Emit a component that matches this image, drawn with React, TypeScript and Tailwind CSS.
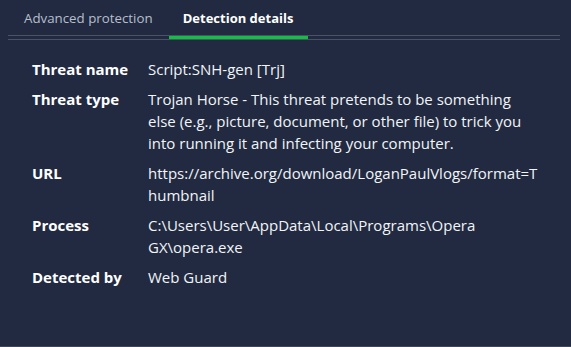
const rows: { label: string; lines: string[] }[] = [
  { label: "Threat name", lines: ["Script:SNH-gen [Trj]"] },
  {
    label: "Threat type",
    lines: [
      "Trojan Horse - This threat pretends to be something",
      "else (e.g., picture, document, or other file) to trick you",
      "into running it and infecting your computer.",
    ],
  },
  { label: "URL", lines: ["https://archive.org/download/LoganPaulVlogs/format=T", "humbnail"] },
  { label: "Process", lines: ["C:\\Users\\User\\AppData\\Local\\Programs\\Opera", "GX\\opera.exe"] },
  { label: "Detected by", lines: ["Web Guard"] },
];

export default function App() {
  return (
    <div
      className="w-[571px] h-[347px] bg-[#212a40] flex flex-col overflow-hidden"
      style={{ fontFamily: "'Open Sans', sans-serif" }}
    >
      <div className="px-2 pr-[11px]">
        <div className="flex border-b border-[#4a5266] h-[36px]">
          <div className="px-4 pt-[8px] text-[13.3px] leading-[20px] text-[#b7bfcd]">Advanced protection</div>
          <div className="relative w-[139px] pt-[8px] text-center text-[13px] leading-[20px] font-bold text-white">
            Detection details
            <div className="absolute left-0 right-0 -bottom-[4px] h-[3px] bg-[#0fc13f]" />
          </div>
        </div>
        <div className="mt-[3px] h-px bg-[#4a5266]" />
      </div>
      <div className="flex-1 pt-[18px] px-8 flex flex-col gap-2 text-[15px] leading-[22px] text-white">
        {rows.map((r) => (
          <div key={r.label} className="flex">
            <div className="w-[116px] shrink-0 font-bold">{r.label}</div>
            <div className="whitespace-nowrap text-[#f2f4f8]">
              {r.lines.map((l, i) => (
                <div key={i}>{l}</div>
              ))}
            </div>
          </div>
        ))}
      </div>
      <div className="h-px bg-[#3f475b]" />
    </div>
  );
}
